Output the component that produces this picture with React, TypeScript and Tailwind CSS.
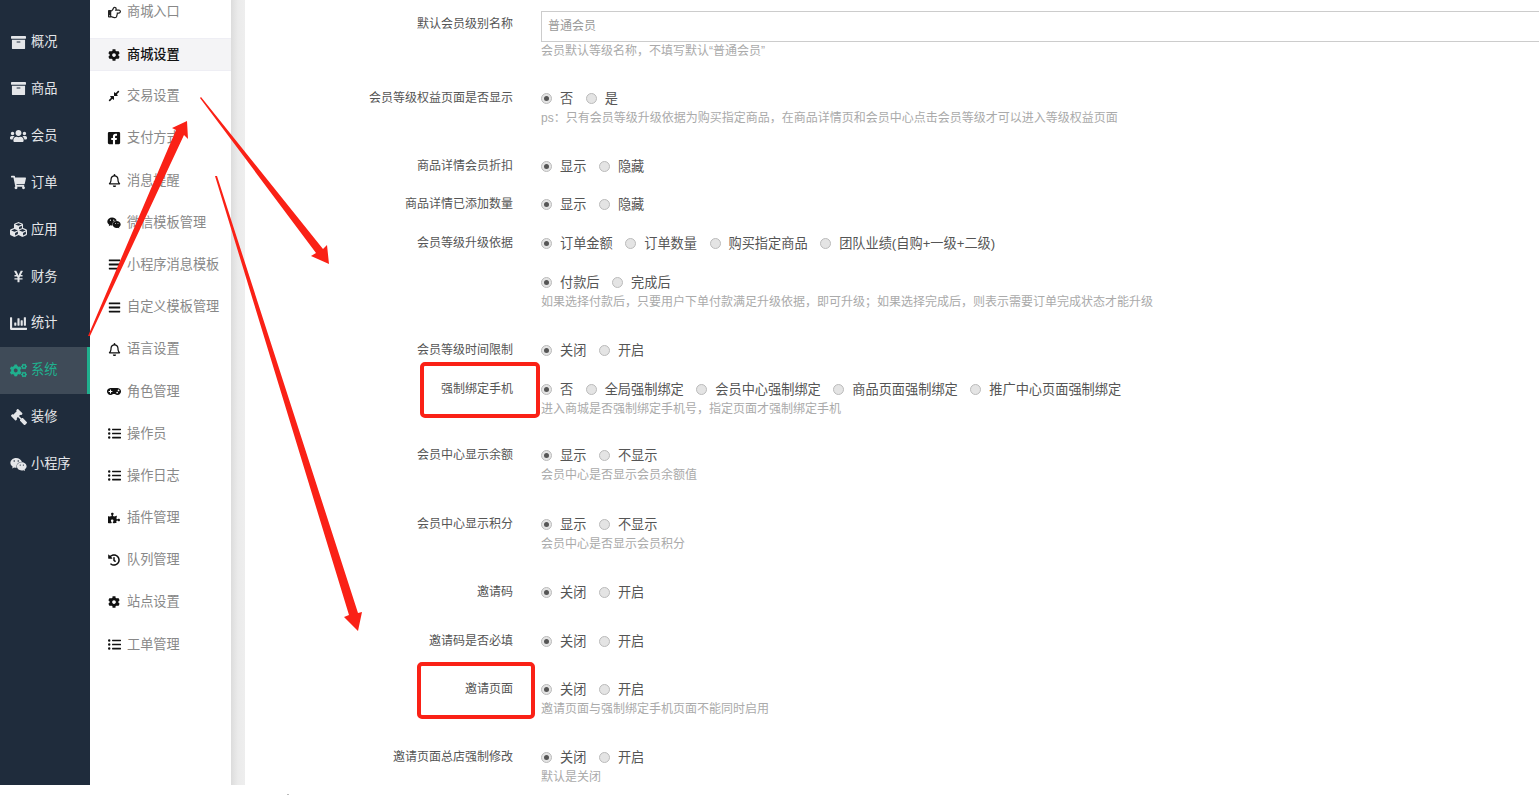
import React from 'react';
import {
  FaArchive,
  FaUsers,
  FaShoppingCart,
  FaCubes,
  FaYenSign,
  FaChartBar,
  FaCogs,
  FaGavel,
  FaWeixin,
  FaRegHandPointRight,
  FaCog,
  FaCompressAlt,
  FaFacebookSquare,
  FaRegBell,
  FaBars,
  FaGamepad,
  FaListUl,
  FaPuzzlePiece,
  FaHistory,
} from 'react-icons/fa';

const mainNav = [
  { label: '概况', icon: <FaArchive size={15} /> },
  { label: '商品', icon: <FaArchive size={15} /> },
  { label: '会员', icon: <FaUsers size={18} /> },
  { label: '订单', icon: <FaShoppingCart size={15} /> },
  { label: '应用', icon: <FaCubes size={19} /> },
  { label: '财务', icon: <FaYenSign size={13} /> },
  { label: '统计', icon: <FaChartBar size={17} /> },
  { label: '系统', icon: <FaCogs size={17} />, active: true },
  { label: '装修', icon: <FaGavel size={16} className="-scale-x-100" /> },
  { label: '小程序', icon: <FaWeixin size={19} /> },
];

const subNav = [
  { label: '商城设置', icon: <FaCog size={12} />, active: true },
  { label: '交易设置', icon: <FaCompressAlt size={12} /> },
  { label: '支付方式', icon: <FaFacebookSquare size={14} /> },
  { label: '消息提醒', icon: <FaRegBell size={13} /> },
  { label: '微信模板管理', icon: <FaWeixin size={16} /> },
  { label: '小程序消息模板', icon: <FaBars size={13} /> },
  { label: '自定义模板管理', icon: <FaBars size={13} /> },
  { label: '语言设置', icon: <FaRegBell size={13} /> },
  { label: '角色管理', icon: <FaGamepad size={15} /> },
  { label: '操作员', icon: <FaListUl size={13} /> },
  { label: '操作日志', icon: <FaListUl size={13} /> },
  { label: '插件管理', icon: <FaPuzzlePiece size={12} /> },
  { label: '队列管理', icon: <FaHistory size={12} /> },
  { label: '站点设置', icon: <FaCog size={12} /> },
  { label: '工单管理', icon: <FaListUl size={13} /> },
];

const Radio = ({ label, checked }: { label: string; checked?: boolean }) => (
  <span className="flex items-center mr-[12.5px]">
    <span className="w-[11px] h-[11px] rounded-full border border-[#bbb] bg-[#e4e4e4] flex items-center justify-center mr-2">
      {checked && <span className="w-[5px] h-[5px] rounded-full bg-[#555]" />}
    </span>
    <span className="text-[13.2px] text-[#555] whitespace-nowrap">{label}</span>
  </span>
);

const FormRow = ({
  height,
  label,
  options,
  help,
}: {
  height: string;
  label?: string;
  options: string[];
  help?: string;
}) => (
  <div className={`flex ${height}`}>
    <div className="w-[268px] h-5 leading-5 text-xs text-[#555] text-right shrink-0">{label}</div>
    <div className="ml-7">
      <div className="flex h-[21px] pt-px items-center">
        {options.map((option, i) => (
          <Radio key={option} label={option} checked={i === 0} />
        ))}
      </div>
      {help && <p className="text-xs leading-[18px] text-[#aaa] whitespace-nowrap">{help}</p>}
    </div>
  </div>
);

export default function App() {
  return (
    <div className="relative w-[1539px] h-[795px] overflow-hidden bg-white font-['Liberation_Sans','Noto_Sans_CJK_SC',sans-serif]">
      <div className="flex h-[785px]">
        {/* main nav */}
        <aside className="w-[90px] shrink-0 bg-[#1f2c3c] pt-[18.6px]">
          {mainNav.map((item) => (
            <div
              key={item.label}
              className={
                item.active
                  ? 'flex items-center h-[46.9px] pl-[10px] bg-[#3f4b58] border-r-[3px] border-[#1fb08e] text-[#1fb08e] text-[13.2px]'
                  : 'flex items-center h-[46.9px] pl-[10px] text-[#e4e6e9] text-[13.2px]'
              }
            >
              <span className="w-[17px] flex justify-center mr-1">{item.icon}</span>
              {item.label}
            </div>
          ))}
        </aside>

        {/* sub nav */}
        <aside className="w-[141px] shrink-0 bg-white">
          <div className="flex items-center h-[38px] pl-[17px] pb-[14px] text-[13.2px] text-[#888]">
            <span className="w-[14px] flex justify-center mr-[6px] text-[#222]">
              <FaRegHandPointRight size={13} />
            </span>
            商城入口
          </div>
          {subNav.map((item) =>
            item.active ? (
              <div
                key={item.label}
                className="flex items-center h-[33px] pl-[17px] mb-1 bg-[#f4f4f6] border-y border-[#eeeef4] text-[13.2px] text-[#111] font-medium"
              >
                <span className="w-[14px] flex justify-center mr-[6px] text-[#111]">{item.icon}</span>
                {item.label}
              </div>
            ) : (
              <div key={item.label} className="flex items-center h-[42.2px] pl-[17px] text-[13.2px] text-[#888]">
                <span className="w-[14px] flex justify-center mr-[6px] text-[#111]">{item.icon}</span>
                {item.label}
              </div>
            ),
          )}
        </aside>

        <div className="w-[14px] shrink-0 bg-linear-to-r from-[#dcdcdc] via-[#ebebeb] to-[#eeeeee]" />

        {/* form */}
        <main className="flex-1 pt-[11px] overflow-hidden">
          <div className="flex h-[77px]">
            <div className="w-[268px] pt-[3px] leading-5 text-xs text-[#555] text-right shrink-0">默认会员级别名称</div>
            <div className="ml-7 flex-1">
              <div className="w-[1100px] h-[31px] border border-[#ccc] pl-[6px] leading-[29px] text-xs text-[#999]">普通会员</div>
              <p className="text-xs leading-[18px] text-[#aaa]">会员默认等级名称，不填写默认“普通会员”</p>
            </div>
          </div>
          <FormRow
            height="h-[68px]"
            label="会员等级权益页面是否显示"
            options={['否', '是']}
            help="ps：只有会员等级升级依据为购买指定商品，在商品详情页和会员中心点击会员等级才可以进入等级权益页面"
          />
          <FormRow height="h-[38px]" label="商品详情会员折扣" options={['显示', '隐藏']} />
          <FormRow height="h-[39px]" label="商品详情已添加数量" options={['显示', '隐藏']} />
          <FormRow
            height="h-[39px]"
            label="会员等级升级依据"
            options={['订单金额', '订单数量', '购买指定商品', '团队业绩(自购+一级+二级)']}
          />
          <FormRow
            height="h-[68px]"
            options={['付款后', '完成后']}
            help="如果选择付款后，只要用户下单付款满足升级依据，即可升级；如果选择完成后，则表示需要订单完成状态才能升级"
          />
          <FormRow height="h-[39px]" label="会员等级时间限制" options={['关闭', '开启']} />
          <FormRow
            height="h-[66px]"
            label="强制绑定手机"
            options={['否', '全局强制绑定', '会员中心强制绑定', '商品页面强制绑定', '推广中心页面强制绑定']}
            help="进入商城是否强制绑定手机号，指定页面才强制绑定手机"
          />
          <FormRow height="h-[69px]" label="会员中心显示余额" options={['显示', '不显示']} help="会员中心是否显示会员余额值" />
          <FormRow height="h-[68px]" label="会员中心显示积分" options={['显示', '不显示']} help="会员中心是否显示会员积分" />
          <FormRow height="h-[49px]" label="邀请码" options={['关闭', '开启']} />
          <FormRow height="h-[48px]" label="邀请码是否必填" options={['关闭', '开启']} />
          <FormRow height="h-[68px]" label="邀请页面" options={['关闭', '开启']} help="邀请页面与强制绑定手机页面不能同时启用" />
          <FormRow height="h-[38px]" label="邀请页面总店强制修改" options={['关闭', '开启']} help="默认是关闭" />
        </main>
      </div>

      {/* annotations drawn on top of the screenshot */}
      <div className="absolute left-[420px] top-[362px] w-[120px] h-[56px] rounded-[5px] border-4 border-[#fa2116]" />
      <div className="absolute left-[417px] top-[662px] w-[118px] h-[57px] rounded-[5px] border-4 border-[#fa2116]" />
      <div className="absolute left-[287px] top-[794px] w-[2px] h-px bg-[#bbb]" />
      <svg className="absolute left-0 top-0 pointer-events-none" width="1539" height="795" viewBox="0 0 1539 795">
        <g fill="#fa2116">
          <polygon points="88,336 176,130 172,128 187,121 188,139 184,135 90,336" />
          <polygon points="201,97 323,249 327,245 329,264 311,256 316,253 200,98" />
          <polygon points="215,176 217,176 358,613 362,612 358,631 344,617 349,615" />
        </g>
      </svg>
    </div>
  );
}
